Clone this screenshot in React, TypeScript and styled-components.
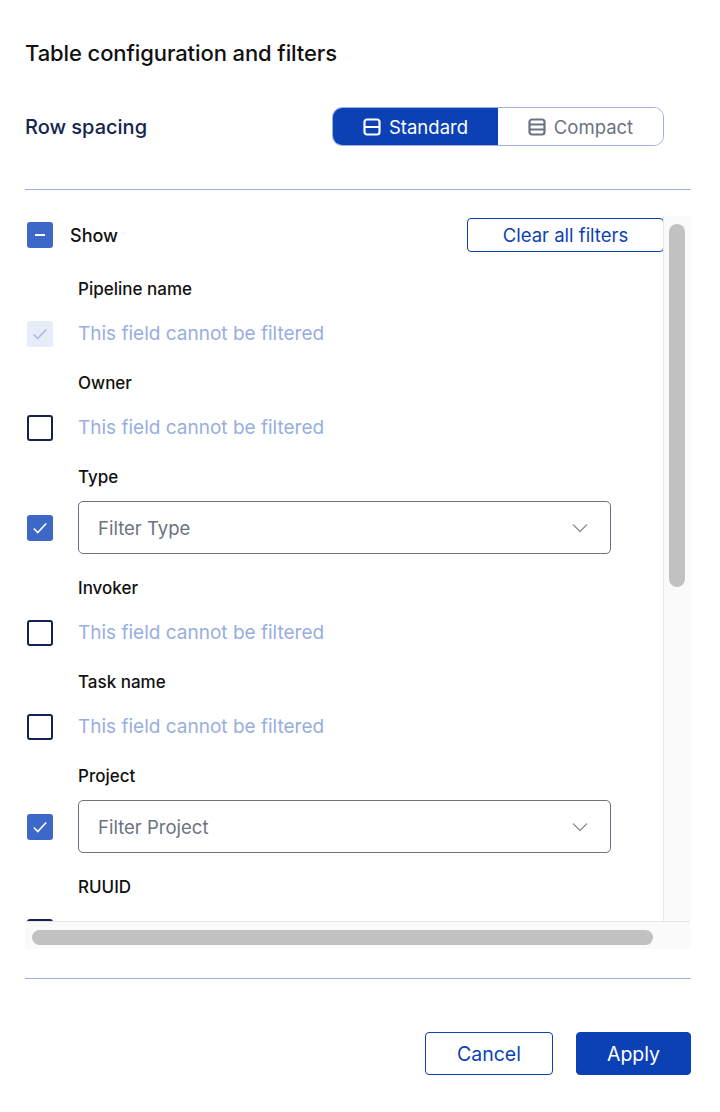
import React from "react";
import styled, { createGlobalStyle } from "styled-components";

const Global = createGlobalStyle`
  body { margin: 0; font-family: Inter, "Noto Sans", sans-serif; background: #fff; }
`;

const Page = styled.div`
  width: 720px; height: 1112px; box-sizing: border-box;
  padding: 40px 29px 0 25px; display: flex; flex-direction: column;
`;
const Title = styled.h1`
  margin: 0; font-size: 22px; font-weight: 500; color: #111; letter-spacing: -0.1px;
`;
const SpacingRow = styled.div`
  display: flex; justify-content: space-between; align-items: center;
  margin-top: 41px; padding-right: 27px;
`;
const SpacingLabel = styled.div`
  font-size: 20px; font-weight: 500; color: #14254d;
`;
const Toggle = styled.div`
  display: flex; width: 332px; height: 39px; border: 1px solid #9db0e0;
  border-radius: 10px; overflow: hidden; box-sizing: border-box;
`;
const ToggleBtn = styled.div<{ $on?: boolean }>`
  flex: 1; display: flex; align-items: center; justify-content: center; gap: 8px;
  font-size: 18.5px; font-weight: 400;
  background: ${p => (p.$on ? "#0b41b5" : "#fff")};
  color: ${p => (p.$on ? "#fff" : "#6b7280")};
`;
const Divider = styled.div<{ $mt: number }>`
  height: 1px; background: #9db0e0; margin-top: ${p => p.$mt}px;
`;
const ScrollFrame = styled.div`
  margin-top: 26px; height: 733px; display: grid;
  grid-template-columns: 638px 27px; grid-template-rows: 705px 28px;
`;
const Viewport = styled.div`
  overflow: hidden;
`;
const VTrack = styled.div`
  background: #fafafa; border-left: 1px solid #e8e8e8; padding: 8px 5px 0 5px;
`;
const VThumb = styled.div`
  height: 363px; background: #c1c1c1; border-radius: 8px;
`;
const HTrack = styled.div`
  grid-column: 1 / 3; background: #fafafa; border-top: 1px solid #e8e8e8;
  padding: 8px 37px 0 7px;
`;
const HThumb = styled.div`
  height: 15px; background: #c1c1c1; border-radius: 8px;
`;
const Content = styled.div`
  width: 640px; padding-top: 2px;
`;
const HeadRow = styled.div`
  display: flex; align-items: center; height: 34px;
`;
const ShowText = styled.span`
  font-size: 18px; font-weight: 500; color: #111; margin-left: 17px; flex: 1;
`;
const ClearBtn = styled.button`
  width: 197px; height: 34px; border: 1px solid #0b41b5; border-radius: 4px;
  background: #fff; color: #0b41b5; font: 400 18.5px Inter, sans-serif; margin-right: 1px;
`;
const Field = styled.div<{ $select?: boolean }>`
  display: grid; grid-template-columns: 51px 1fr; padding-left: 2px;
  height: ${p => (p.$select ? 111 : 94)}px; align-content: start;
`;
const Label = styled.div`
  grid-column: 2; font-size: 17px; font-weight: 500; color: #111; height: 22px;
  margin-top: 27px;
`;
const BoxCell = styled.div<{ $select?: boolean }>`
  grid-column: 1; display: flex; align-items: center;
  height: ${p => (p.$select ? 53 : 26)}px; margin-top: ${p => (p.$select ? 12 : 20)}px;
`;
const Box = styled.div<{ $kind: "on" | "off" | "disabled" }>`
  width: 26px; height: 26px; box-sizing: border-box; border-radius: 3px;
  display: flex; align-items: center; justify-content: center;
  background: ${p => (p.$kind === "on" ? "#3d68c8" : p.$kind === "disabled" ? "#e6ecf8" : "#fff")};
  border: ${p => (p.$kind === "off" ? "2px solid #13224a" : "none")};
`;
const Muted = styled.div`
  grid-column: 2; font-size: 19px; color: #97aee0; height: 26px; line-height: 26px;
  margin-top: 20px; white-space: nowrap;
`;
const Select = styled.div`
  grid-column: 2; width: 533px; height: 53px; box-sizing: border-box; margin-top: 12px;
  border: 1px solid #6b7383; border-radius: 5px; display: flex; align-items: center;
  justify-content: space-between; padding: 0 22px 0 19px;
  font-size: 18.5px; color: #6b7280;
`;
const Footer = styled.div`
  display: flex; justify-content: flex-end; gap: 23px; margin-top: 53px;
`;
const Btn = styled.button<{ $primary?: boolean }>`
  height: 43px; border-radius: 4px; font: 400 19.5px Inter, sans-serif;
  width: ${p => (p.$primary ? 115 : 128)}px;
  border: 1px solid #0b41b5;
  background: ${p => (p.$primary ? "#0b41b5" : "#fff")};
  color: ${p => (p.$primary ? "#fff" : "#0b41b5")};
`;

const Check = ({ c }: { c: string }) => (
  <svg width="18" height="18" viewBox="0 0 16 16"><path d="M2.5 8.5l3.5 3.5 7.5-8" fill="none" stroke={c} strokeWidth="1.4" /></svg>
);

type F = { label: string; kind: "on" | "off" | "disabled"; select?: string };
const fields: F[] = [
  { label: "Pipeline name", kind: "disabled" },
  { label: "Owner", kind: "off" },
  { label: "Type", kind: "on", select: "Filter Type" },
  { label: "Invoker", kind: "off" },
  { label: "Task name", kind: "off" },
  { label: "Project", kind: "on", select: "Filter Project" },
  { label: "RUUID", kind: "off" },
  { label: "Status", kind: "off" },
];

export default function App() {
  return (
    <>
      <Global />
      <Page>
        <Title>Table configuration and filters</Title>
        <SpacingRow>
          <SpacingLabel>Row spacing</SpacingLabel>
          <Toggle>
            <ToggleBtn $on>
              <svg width="18" height="18" viewBox="0 0 18 18"><rect x="1.5" y="1.5" width="15" height="15" rx="2.5" fill="none" stroke="#fff" strokeWidth="2.2" /><path d="M2 9h14" stroke="#fff" strokeWidth="2.2" /></svg>
              Standard
            </ToggleBtn>
            <ToggleBtn>
              <svg width="18" height="18" viewBox="0 0 18 18"><rect x="1.5" y="1.5" width="15" height="15" rx="2.5" fill="none" stroke="#6b7280" strokeWidth="2.2" /><path d="M2 6.5h14M2 11.5h14" stroke="#6b7280" strokeWidth="2" /></svg>
              Compact
            </ToggleBtn>
          </Toggle>
        </SpacingRow>
        <Divider $mt={43} />
        <ScrollFrame>
          <Viewport>
            <Content>
              <HeadRow>
                <Box $kind="on" style={{ marginLeft: 2 }}>
                  <svg width="14" height="14" viewBox="0 0 14 14"><path d="M2 7h10" stroke="#fff" strokeWidth="2" /></svg>
                </Box>
                <ShowText>Show</ShowText>
                <ClearBtn>Clear all filters</ClearBtn>
              </HeadRow>
              {fields.map(f => (
                <Field key={f.label} $select={!!f.select}>
                  <Label>{f.label}</Label>
                  <BoxCell $select={!!f.select}>
                    <Box $kind={f.kind}>
                      {f.kind !== "off" && <Check c={f.kind === "on" ? "#fff" : "#a9bbe4"} />}
                    </Box>
                  </BoxCell>
                  {f.select ? (
                    <Select>
                      {f.select}
                      <svg width="16" height="10" viewBox="0 0 16 10"><path d="M1 1.5l7 7 7-7" fill="none" stroke="#8a909c" strokeWidth="1.3" /></svg>
                    </Select>
                  ) : (
                    <Muted>This field cannot be filtered</Muted>
                  )}
                </Field>
              ))}
            </Content>
          </Viewport>
          <VTrack><VThumb /></VTrack>
          <HTrack><HThumb /></HTrack>
        </ScrollFrame>
        <Divider $mt={29} />
        <Footer>
          <Btn>Cancel</Btn>
          <Btn $primary>Apply</Btn>
        </Footer>
      </Page>
    </>
  );
}
